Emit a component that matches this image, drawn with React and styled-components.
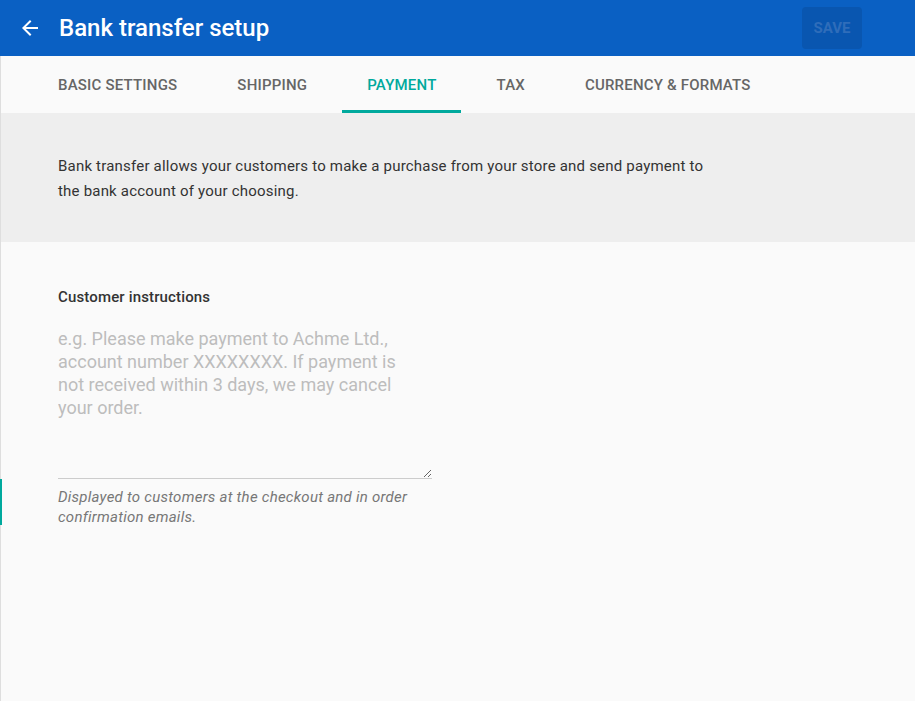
import React from "react";
import styled, { createGlobalStyle } from "styled-components";

const Global = createGlobalStyle`
  html, body { margin: 0; padding: 0; background: #fafafa; }
  body { font-family: Roboto, "Noto Sans", sans-serif; -webkit-font-smoothing: antialiased; }
  * { box-sizing: border-box; }
`;

const Page = styled.div`
  width: 915px;
  height: 701px;
  display: flex;
  flex-direction: column;
  background: #fafafa;
  overflow: hidden;
`;

const Header = styled.header`
  height: 56px;
  flex: none;
  background: #0a60c3;
  display: flex;
  align-items: center;
  padding: 0 53px 0 18px;
`;

const BackButton = styled.button`
  width: 24px;
  height: 24px;
  padding: 0;
  border: 0;
  background: none;
  display: flex;
  color: #fff;
  cursor: pointer;
`;

const Title = styled.h1`
  margin: 0 0 0 17px;
  font-size: 24px;
  font-weight: 500;
  color: #fff;
  flex: 1;
  letter-spacing: 0;
`;

const SaveButton = styled.button`
  width: 60px;
  height: 42px;
  border: 0;
  border-radius: 4px;
  background: #0956b0;
  color: #2f6dba;
  font-family: Roboto, sans-serif;
  font-size: 15px;
  font-weight: 700;
  letter-spacing: 0;
`;

const Body = styled.div`
  flex: 1;
  position: relative;
  border-left: 1px solid #dedede;
  display: flex;
  flex-direction: column;
`;

const Tabs = styled.nav`
  height: 57px;
  flex: none;
  display: flex;
  gap: 10px;
  padding-left: 32px;
  background: #fafafa;
`;

const Tab = styled.div`
  padding: 0 25px;
  display: flex;
  align-items: center;
  font-size: 15px;
  font-weight: 500;
  letter-spacing: 0.2px;
  text-transform: uppercase;
  color: ${(p) => (p.$active ? "#00a99d" : "#666666")};
  border-bottom: 3px solid ${(p) => (p.$active ? "#00a99d" : "transparent")};
  padding-top: 3px;
`;

const Info = styled.section`
  background: #eeeeee;
  height: 129px;
  padding: 41px 0 0 57px;
`;

const InfoText = styled.p`
  margin: 0;
  max-width: 656px;
  font-size: 15px;
  letter-spacing: 0.2px;
  line-height: 25px;
  color: #333333;
`;

const Form = styled.section`
  padding: 45px 0 0 57px;
  display: flex;
  flex-direction: column;
`;

const Label = styled.label`
  font-size: 15px;
  font-weight: 500;
  letter-spacing: 0.15px;
  color: #333333;
  line-height: 20px;
`;

const TextArea = styled.textarea`
  margin-top: 20px;
  width: 374px;
  height: 152px;
  padding: 0 36px 0 0;
  border: 0;
  border-bottom: 1px solid #cccccc;
  background: transparent;
  font-family: Roboto, sans-serif;
  font-size: 18px;
  line-height: 23px;
  color: #333;
  outline: none;
  resize: vertical;
  &::placeholder {
    color: #bdbdbd;
  }
`;

const Help = styled.p`
  margin: 8px 0 0;
  width: 374px;
  font-size: 15px;
  font-style: italic;
  letter-spacing: 0.25px;
  line-height: 20px;
  color: #777777;
`;

const FocusMark = styled.div`
  position: absolute;
  left: -1px;
  top: 423px;
  width: 2px;
  height: 46px;
  background: #00a99d;
`;

export default function App() {
  const tabs = ["Basic settings", "Shipping", "Payment", "Tax", "Currency & formats"];
  return (
    <Page>
      <Global />
      <Header>
        <BackButton aria-label="Back">
          <svg width="24" height="24" viewBox="0 0 24 24" fill="currentColor">
            <path d="M20 11H7.83l5.59-5.59L12 4l-8 8 8 8 1.41-1.41L7.83 13H20v-2z" />
          </svg>
        </BackButton>
        <Title>Bank transfer setup</Title>
        <SaveButton disabled>SAVE</SaveButton>
      </Header>
      <Body>
        <Tabs>
          {tabs.map((t) => (
            <Tab key={t} $active={t === "Payment"}>
              {t}
            </Tab>
          ))}
        </Tabs>
        <Info>
          <InfoText>
            Bank transfer allows your customers to make a purchase from your store and send payment to
            the bank account of your choosing.
          </InfoText>
        </Info>
        <Form>
          <Label htmlFor="instr">Customer instructions</Label>
          <TextArea
            id="instr"
            placeholder="e.g. Please make payment to Achme Ltd., account number XXXXXXXX. If payment is not received within 3 days, we may cancel your order."
          />
          <Help>Displayed to customers at the checkout and in order confirmation emails.</Help>
        </Form>
        <FocusMark />
      </Body>
    </Page>
  );
}
